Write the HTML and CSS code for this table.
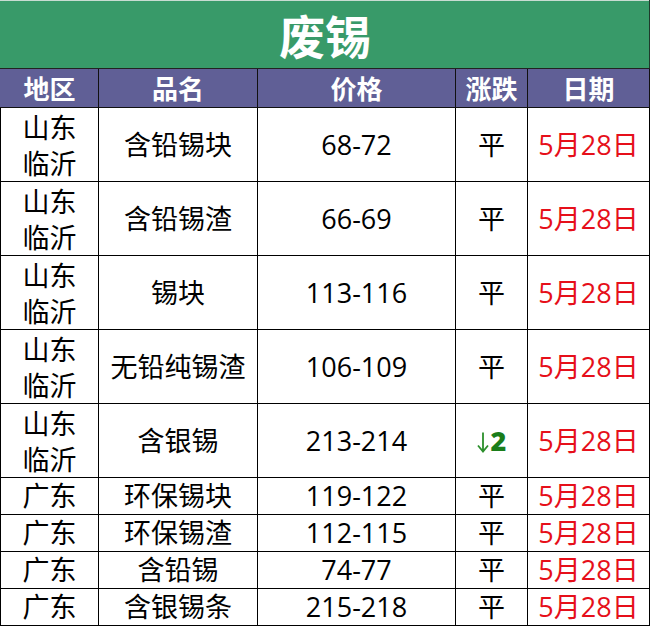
FILE: index.html
```html
<!DOCTYPE html>
<html lang="zh">
<head>
<meta charset="utf-8">
<title>废锡</title>
<link rel="stylesheet" href="styles.css">
</head>
<body>
<table class="price-table">
  <colgroup>
    <col class="c-region">
    <col class="c-name">
    <col class="c-price">
    <col class="c-change">
    <col class="c-date">
  </colgroup>
  <thead>
    <tr class="title-row"><th colspan="5">废锡</th></tr>
    <tr class="head-row">
      <th>地区</th><th>品名</th><th>价格</th><th>涨跌</th><th>日期</th>
    </tr>
  </thead>
  <tbody>
    <tr class="tall"><td class="region">山东<br>临沂</td><td>含铅锡块</td><td class="num">68-72</td><td>平</td><td class="date">5月28日</td></tr>
    <tr class="tall"><td class="region">山东<br>临沂</td><td>含铅锡渣</td><td class="num">66-69</td><td>平</td><td class="date">5月28日</td></tr>
    <tr class="tall"><td class="region">山东<br>临沂</td><td>锡块</td><td class="num">113-116</td><td>平</td><td class="date">5月28日</td></tr>
    <tr class="tall"><td class="region">山东<br>临沂</td><td>无铅纯锡渣</td><td class="num">106-109</td><td>平</td><td class="date">5月28日</td></tr>
    <tr class="tall"><td class="region">山东<br>临沂</td><td>含银锡</td><td class="num">213-214</td><td class="down"><svg class="arrow" width="12" height="21" viewBox="0 0 12 21" aria-label="↓"><path d="M6 0.5V19.5M1 13.5L6 19.5L11 13.5" fill="none" stroke="#2c8f2c" stroke-width="1.8"/></svg><b>2</b></td><td class="date">5月28日</td></tr>
    <tr class="short"><td>广东</td><td>环保锡块</td><td class="num">119-122</td><td>平</td><td class="date">5月28日</td></tr>
    <tr class="short"><td>广东</td><td>环保锡渣</td><td class="num">112-115</td><td>平</td><td class="date">5月28日</td></tr>
    <tr class="short"><td>广东</td><td>含铅锡</td><td class="num">74-77</td><td>平</td><td class="date">5月28日</td></tr>
    <tr class="short last"><td>广东</td><td>含银锡条</td><td class="num">215-218</td><td>平</td><td class="date">5月28日</td></tr>
  </tbody>
</table>
</body>
</html>
```

FILE: styles.css
```css
html, body {
  margin: 0;
  padding: 0;
  background: #ffffff;
}

.price-table {
  border-collapse: collapse;
  table-layout: fixed;
  width: 649px;
  font-family: "Open Sans", "Noto Sans CJK SC", sans-serif;
  color: #000000;
}

.c-region { width: 98px; }
.c-name { width: 159px; }
.c-price { width: 198px; }
.c-change { width: 72px; }
.c-date { width: 122px; }

.title-row th {
  height: 67px;
  padding: 0;
  background: #389a69;
  color: #ffffff;
  font-family: "Noto Sans CJK SC", sans-serif;
  font-weight: 700;
  font-size: 46px;
  line-height: 67px;
  text-align: center;
  border-top: 1px solid #c8dcd2;
  border-left: 1px solid #389a69;
  border-right: 1px solid #1e3a2c;
  border-bottom: 1px solid #222222;
}

.head-row th {
  height: 38px;
  padding: 0;
  background: #605f96;
  color: #ffffff;
  font-family: "Noto Sans CJK SC", sans-serif;
  font-weight: 700;
  font-size: 26px;
  line-height: 38px;
  text-align: center;
  border: 1px solid #111111;
  border-left-color: #605f96;
}

.head-row th:first-child { border-left: 1px solid #605f96; }

td {
  padding: 0;
  text-align: center;
  vertical-align: middle;
  border: 1px solid #000000;
  font-size: 27px;
  white-space: nowrap;
  overflow: hidden;
}

td:first-child { border-left: 1px solid #000000; }

.tall td {
  height: 73px;
  line-height: 36px;
}

.short td {
  height: 36px;
  line-height: 36px;
}

.short.last td { height: 35px; }

.region {
  font-family: "Noto Sans CJK SC", sans-serif;
}

.num {
  font-size: 27px;
}

.date {
  color: #e60f1a;
}

.down {
  color: #1a7d1a;
  font-weight: 700;
}

.down .arrow {
  vertical-align: -2px;
  margin-right: 2px;
}

.down b {
  font-family: "Open Sans", sans-serif;
  font-size: 27px;
}
```
